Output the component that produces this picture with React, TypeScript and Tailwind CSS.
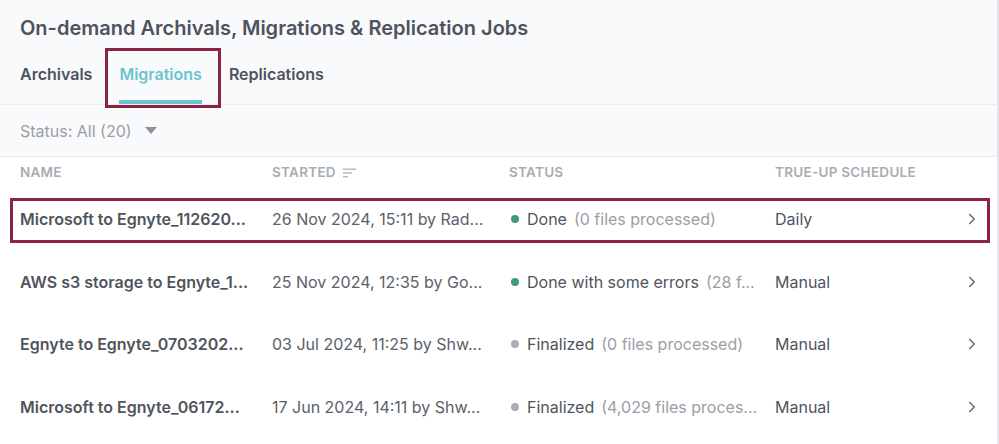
import { ChevronRight } from "lucide-react";

type Job = {
  name: string;
  started: string;
  status: string;
  detail: string;
  done: boolean;
  schedule: string;
};

// texts as shown in the table (already clipped by the app)
const jobs: Job[] = [
  {
    name: "Microsoft to Egnyte_112620...",
    started: "26 Nov 2024, 15:11 by Rad...",
    status: "Done",
    detail: "(0 files processed)",
    done: true,
    schedule: "Daily",
  },
  {
    name: "AWS s3 storage to Egnyte_1...",
    started: "25 Nov 2024, 12:35 by Go...",
    status: "Done with some errors",
    detail: "(28 f...",
    done: true,
    schedule: "Manual",
  },
  {
    name: "Egnyte to Egnyte_0703202...",
    started: "03 Jul 2024, 11:25 by Shw...",
    status: "Finalized",
    detail: "(0 files processed)",
    done: false,
    schedule: "Manual",
  },
  {
    name: "Microsoft to Egnyte_06172...",
    started: "17 Jun 2024, 14:11 by Shw...",
    status: "Finalized",
    detail: "(4,029 files proces...",
    done: false,
    schedule: "Manual",
  },
];

const cols = "grid grid-cols-[232px_217px_246px_1fr_24px] gap-x-5 items-center";

function SortIcon() {
  return (
    <svg width="14" height="10" viewBox="0 0 14 10" className="ml-[7px]">
      <rect x="0" y="0.5" width="13" height="1.4" fill="#b3b7be" />
      <rect x="0" y="4.3" width="9" height="1.4" fill="#b3b7be" />
      <rect x="0" y="8.1" width="5" height="1.4" fill="#b3b7be" />
    </svg>
  );
}

export default function App() {
  return (
    <div
      className="w-[999px] h-[444px] overflow-hidden bg-white border-r-2 border-[#e4e6ea]"
      style={{ fontFamily: "Inter, 'Noto Sans', sans-serif" }}
    >
      {/* Header + tabs */}
      <div className="bg-[#f9fafc] border-b border-[#eaecf0]">
        <h1 className="px-5 pt-[14px] text-[20px] leading-[28px] font-semibold text-[#4e535d] whitespace-nowrap">
          On-demand Archivals, Migrations &amp; Replication Jobs
        </h1>
        <div className="flex gap-[27px] px-5 mt-[20px] text-[16px] leading-[24px] font-semibold">
          <div className="text-[#4e535d] pb-[14px] border-b-[4px] border-transparent">Archivals</div>
          <div className="relative text-[#6cc3cd] pb-[14px] border-b-[4px] border-[#6cc3cd]">
            Migrations
            <div className="absolute -left-[14px] -right-[19px] -top-[14px] -bottom-[8px] border-[3px] border-[#8b2346]" />
          </div>
          <div className="text-[#4e535d] pb-[14px] border-b-[4px] border-transparent">Replications</div>
        </div>
      </div>

      {/* Filter */}
      <div className="bg-[#f9fafc] border-b border-[#eaecf0] h-[52px] px-5 flex items-center">
        <span className="text-[16px] text-[#9a9ea6]">Status: All (20)</span>
        <svg width="12" height="7" viewBox="0 0 12 7" className="ml-[13px]">
          <path d="M0 0h12L6 7z" fill="#8d9199" />
        </svg>
      </div>

      {/* Table header */}
      <div className={`${cols} pl-5 pr-4 h-[31px] text-[13.5px] font-semibold tracking-[0.02em] text-[#a8acb3] uppercase`}>
        <div>Name</div>
        <div className="flex items-center">
          Started
          <SortIcon />
        </div>
        <div>Status</div>
        <div className="whitespace-nowrap">True-up schedule</div>
        <div />
      </div>

      {/* Rows */}
      {jobs.map((j, i) => (
        <div key={j.name} className={`${cols} relative pl-5 pr-4 h-[62.5px] text-[16px] whitespace-nowrap`}>
          <div className="font-semibold text-[#50545d]">{j.name}</div>
          <div className="text-[#5b606a]">{j.started}</div>
          <div className="flex items-center">
            <span
              className={`w-2 h-2 rounded-full shrink-0 ml-[2px] mr-[8px] ${j.done ? "bg-[#3f9c78]" : "bg-[#a9adb5]"}`}
            />
            <span className="text-[#50545d]">{j.status}</span>
            <span className="text-[#9a9ea6] ml-[7px]">{j.detail}</span>
          </div>
          <div className="text-[#50545d]">{j.schedule}</div>
          <div className="flex justify-end">
            <ChevronRight className="w-[18px] h-[18px] text-[#6b7079]" strokeWidth={2.2} />
          </div>
          {i === 0 && (
            <div className="absolute left-[10px] right-[7px] top-[10px] bottom-[8px] border-[3px] border-[#8b2346] pointer-events-none" />
          )}
        </div>
      ))}
    </div>
  );
}
